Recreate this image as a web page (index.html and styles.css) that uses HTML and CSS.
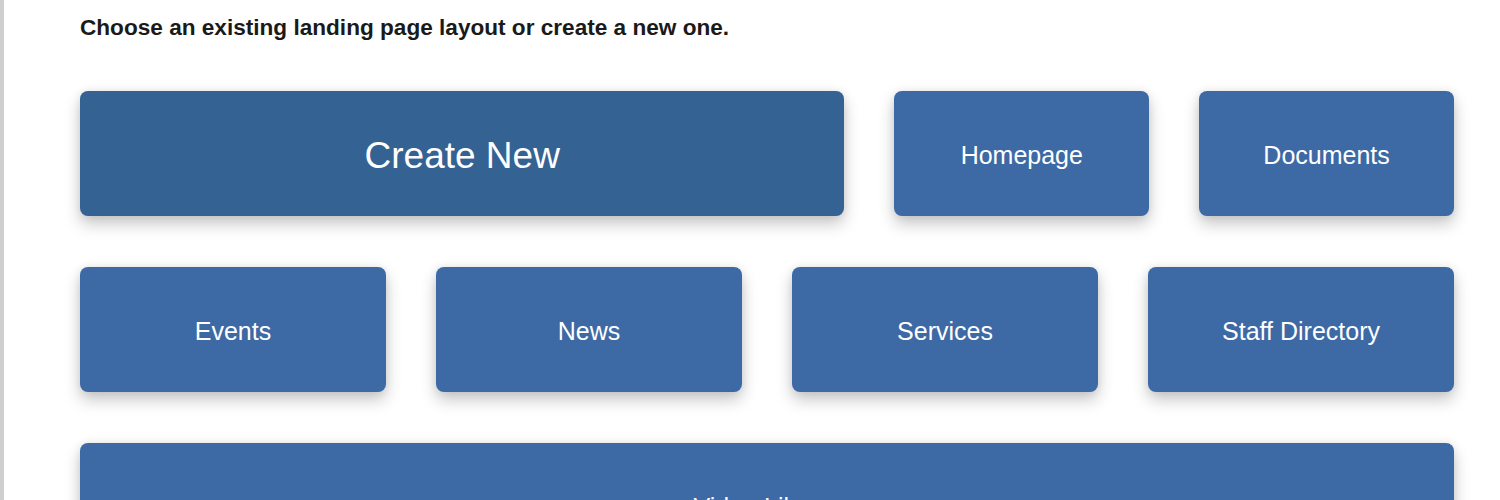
FILE: index.html
```html
<!DOCTYPE html>
<html lang="en">
<head>
    <meta charset="UTF-8">
    <meta name="viewport" content="width=device-width, initial-scale=1.0">
    <title>Landing page layouts</title>
    <link rel="stylesheet" href="styles.css">
</head>
<body>
    <div class="page">
        <h1 class="intro">Choose an existing landing page layout or create a new one.</h1>

        <!-- 첫 줄: 새로 만들기 + 기본 레이아웃 두개 -->
        <div class="row row-top">
            <a class="tile tile-new" href="#">Create New</a>
            <a class="tile" href="#">Homepage</a>
            <a class="tile" href="#">Documents</a>
        </div>

        <div class="row row-four">
            <a class="tile" href="#">Events</a>
            <a class="tile" href="#">News</a>
            <a class="tile" href="#">Services</a>
            <a class="tile" href="#">Staff Directory</a>
        </div>

        <div class="row row-full">
            <a class="tile" href="#">Video Library</a>
        </div>
    </div>
</body>
</html>
```

FILE: styles.css
```css
/* 페이지 공통 */
body {
    margin: 0;
    background: #fff;
    font-family: "Liberation Sans", Arial, sans-serif;
}

.page {
    border-left: 4px solid #cfcfcf;
    padding: 15px 46px 40px 76px;
    min-height: 500px;
    box-sizing: border-box;
}

.intro {
    margin: 0 0 50px;
    font-size: 22.6px;
    line-height: 26px;
    font-weight: bold;
    color: #1a1a1a;
}

/* 줄 배치 */
.row {
    display: grid;
    gap: 50px;
    margin-bottom: 51px;
}

.row-top {
    grid-template-columns: 3fr 1fr 1fr;
}

.row-four {
    grid-template-columns: repeat(4, 1fr);
}

.row-full {
    grid-template-columns: 1fr;
}

/* 타일 디자인 */
.tile {
    display: flex;
    align-items: center;
    justify-content: center;
    height: 125px;
    padding-top: 4px;
    box-sizing: border-box;
    border-radius: 8px;
    background: #3d69a5;
    color: #fff;
    font-size: 25px;
    text-decoration: none;
    box-shadow: 0 8px 16px rgba(0, 0, 0, 0.22), 0 0 8px rgba(0, 0, 0, 0.08);
}

.tile-new {
    background: #346293;
    font-size: 37px;
}
```
